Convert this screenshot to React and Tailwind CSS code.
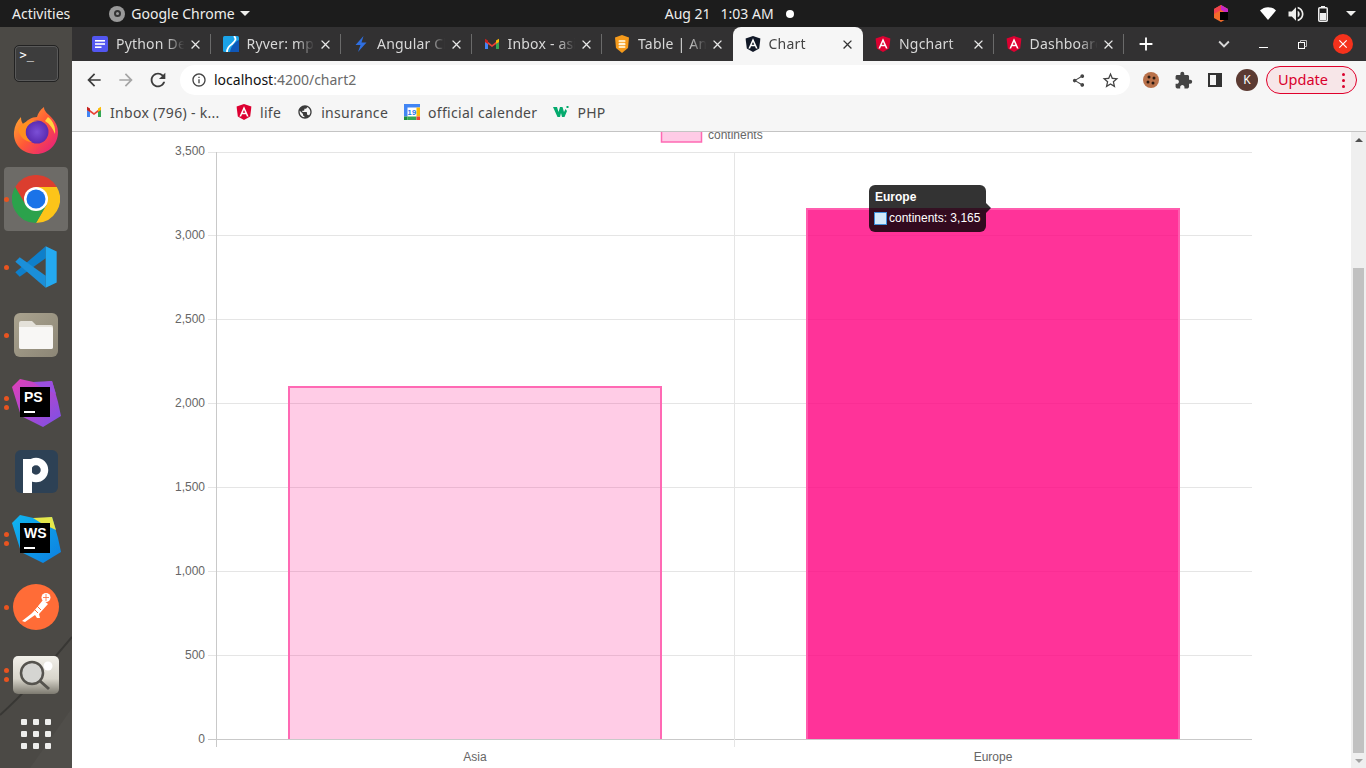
import React from "react";
import {
  MdArrowBack,
  MdArrowForward,
  MdRefresh,
  MdInfoOutline,
  MdShare,
  MdStarBorder,
  MdExtension,
  MdClose,
  MdAdd,
  MdKeyboardArrowDown,
  MdPublic,
  MdVolumeUp,
} from "react-icons/md";

const uiFont = "[font-family:'Noto_Sans','Open_Sans',sans-serif]";

/* ---------- favicons ---------- */
const DocsIcon = () => (
  <svg width="16" height="16" viewBox="0 0 16 16">
    <rect width="16" height="16" rx="2" fill="#5256f0" />
    <rect x="3" y="4" width="10" height="1.6" fill="#fff" />
    <rect x="3" y="7.2" width="10" height="1.6" fill="#fff" />
    <rect x="3" y="10.4" width="6.5" height="1.6" fill="#fff" />
  </svg>
);
const RyverIcon = () => (
  <svg width="16" height="16" viewBox="0 0 16 16">
    <rect width="16" height="16" rx="1.5" fill="#1aa3e8" />
    <path d="M14 5 C11 8 8 10 7 16 L16 16 L16 4Z" fill="#0f57b8" />
    <path d="M11 0 C14 3 12 5 9 8 C6 10 4 12 4 16" fill="none" stroke="#fff" strokeWidth="1.8" />
  </svg>
);
const BoltIcon = () => (
  <svg width="16" height="16" viewBox="0 0 16 16">
    <path d="M10.5 0 L2.5 9 L7.5 9 L5 16 L13.5 6.5 L8.5 6.5 Z" fill="#2f6fe0" />
  </svg>
);
const GmailIcon = () => (
  <svg width="16" height="16" viewBox="0 0 16 16">
    <path d="M1 13 V4.5 L4 6 V13Z" fill="#4285f4" />
    <path d="M15 13 V4.5 L12 6 V13Z" fill="#34a853" />
    <path d="M1 3.5 L8 9 L15 3.5 V6 L8 11 L1 6Z" fill="#ea4335" />
    <path d="M12 4.5 L15 2.8 V6 L12 7.5Z" fill="#fbbc04" />
    <path d="M1 2.8 L4 4.5 V7.5 L1 6Z" fill="#c5221f" />
  </svg>
);
const TableIcon = () => (
  <svg width="16" height="18" viewBox="0 0 16 18">
    <path d="M8 0 L15 2.5 L14 13 L8 18 L2 13 L1 2.5Z" fill="#f59a1b" />
    <rect x="4.5" y="5" width="7" height="2.2" rx="1" fill="#ffe9bd" />
    <rect x="4.5" y="8" width="7" height="2.2" rx="1" fill="#fff4da" />
    <rect x="4.5" y="11" width="7" height="2" rx="1" fill="#ffe9bd" />
  </svg>
);
const AngularIcon = ({ bg = "#dd0031", size = 16 }) => (
  <svg width={size} height={size} viewBox="0 0 16 16">
    <path d="M8 0 L15.4 2.6 L14.2 12.4 L8 16 L1.8 12.4 L0.6 2.6Z" fill={bg} />
    <path d="M8 2.2 L12.6 12.4 L10.9 12.4 L10 10.2 L6 10.2 L5.1 12.4 L3.4 12.4Z M8 6 L6.7 8.8 L9.3 8.8Z" fill="#fff" fillRule="evenodd" />
  </svg>
);
const W3Icon = () => (
  <svg width="16" height="12" viewBox="0 0 16 12">
    <path d="M0 1 H4 L5.5 6 L7 1 H9.5 L11 6 L12.5 3 L14 5 L11.5 11 H9 L8 7 L7 11 H4.5Z" fill="#04aa6d" />
    <rect x="13.5" y="0" width="2" height="2" fill="#04aa6d" />
  </svg>
);
const CalendarIcon = () => (
  <svg width="16" height="16" viewBox="0 0 16 16">
    <rect width="16" height="16" fill="#fff" />
    <path d="M0 0 H16 V3.5 H3.5 V12.5 H0Z" fill="#4285f4" />
    <rect x="12.5" y="3.5" width="3.5" height="9" fill="#fbbc04" />
    <rect x="3.5" y="12.5" width="9" height="3.5" fill="#34a853" />
    <rect y="12.5" width="3.5" height="3.5" fill="#1e8e3e" />
    <rect x="12.5" y="12.5" width="3.5" height="3.5" fill="#ea4335" />
    <text x="8" y="11" textAnchor="middle" fontSize="7.5" fontWeight="700" fill="#1a73e8" fontFamily="Liberation Sans">19</text>
  </svg>
);

/* ---------- dock icons ---------- */
const TerminalIcon = () => (
  <div className="w-[45px] h-[37px] rounded-[5px] bg-[#3d3d3d] border border-[#222] shadow-[inset_0_0_0_1px_#5a5a5a] pl-[5px] pt-[1px] text-[12px] leading-[16px] text-white [font-family:'DejaVu_Sans_Mono',monospace]">
    &gt;_
  </div>
);
const FirefoxIcon = () => (
  <svg width="48" height="48" viewBox="0 0 48 48">
    <defs>
      <linearGradient id="ff1" x1="0" y1="0" x2="1" y2="1">
        <stop offset="0" stopColor="#ffbd2e" />
        <stop offset="0.5" stopColor="#ff5a36" />
        <stop offset="1" stopColor="#e31587" />
      </linearGradient>
      <radialGradient id="ff2" cx="0.5" cy="0.5" r="0.5">
        <stop offset="0" stopColor="#7b4fd6" />
        <stop offset="1" stopColor="#5a2bb0" />
      </radialGradient>
    </defs>
    <path d="M24 47 C10 47 1 37 2 25 C2.5 19 5 14 9 10 C9 14 10 16 12 18 C14 13 20 10 25 10 C26 6 28 3 32 0 C32 4 35 6 39 10 C44 15 46 20 46 25 C46 37 37 47 24 47Z" fill="url(#ff1)" />
    <circle cx="25" cy="25" r="11.5" fill="url(#ff2)" />
    <path d="M6 22 C10 15 18 12 26 14 C21 14 17 17 15 20 C12 25 14 32 20 35 C13 35 7 29 6 22Z" fill="#ff8f1f" />
    <path d="M36 10 C41 14 44 20 43 27 C41 22 38 17 33 14Z" fill="#ffd23f" />
  </svg>
);
const ChromeIcon = () => (
  <svg width="48" height="48" viewBox="0 0 48 48">
    <path d="M24 12 L44.8 12 A24 24 0 0 0 3.2 12 L13.6 30 L24 24Z" fill="#db3e2f" />
    <path d="M44.8 12 A24 24 0 0 1 24 48 L34.4 30 L24 24 L24 12Z" fill="#fcc419" />
    <path d="M24 48 A24 24 0 0 1 3.2 12 L13.6 30 L24 24 L34.4 30Z" fill="#2ba24c" />
    <circle cx="24" cy="24" r="12" fill="#fff" />
    <circle cx="24" cy="24" r="9.5" fill="#1a73e8" />
  </svg>
);
const VscodeIcon = () => (
  <svg width="44" height="44" viewBox="0 0 100 100">
    <path d="M72 3 L3 62 L13 72 L72 30Z" fill="#0e7fcb" />
    <path d="M3 38 L13 28 L72 70 V97Z" fill="#1b8fd9" />
    <path d="M72 3 L97 15 V85 L72 97Z" fill="#24a9f0" />
  </svg>
);
const FilesIcon = () => (
  <div className="w-[44px] h-[44px] rounded-[6px] bg-gradient-to-br from-[#aaa38f] to-[#8c8676] flex items-center justify-center">
    <svg width="34" height="28" viewBox="0 0 34 28">
      <path d="M2 0 H13 L17 4 H32 a2 2 0 0 1 2 2 V26 a2 2 0 0 1 -2 2 H2 a2 2 0 0 1 -2 -2 V2 a2 2 0 0 1 2 -2Z" fill="#e4e1d9" />
      <path d="M0 6 H32 a2 2 0 0 1 2 2 V26 a2 2 0 0 1 -2 2 H2 a2 2 0 0 1 -2 -2Z" fill="#f8f7f5" />
    </svg>
  </div>
);
const JetbrainsIcon = ({ label, id, colors }) => (
  <svg width="50" height="50" viewBox="0 0 50 50">
    <defs>
      <linearGradient id={id} x1="0" y1="0" x2="1" y2="1">
        <stop offset="0" stopColor={colors[0]} />
        <stop offset="1" stopColor={colors[1]} />
      </linearGradient>
    </defs>
    <path d="M1 9 L9 1 L27 5 L41 3 L47 24 L50 38 L32 49 L10 38Z" fill={`url(#${id})`} />
    <path d="M22 4 L41 3 L45 16 L30 9Z" fill={colors[2]} />
    <rect x="9" y="9" width="30" height="30" fill="#000" />
    <text x="13" y="24" fontSize="14" fontWeight="700" fill="#fff" fontFamily="Liberation Sans">{label}</text>
    <rect x="13" y="33" width="11" height="2" fill="#fff" />
  </svg>
);
const PIcon = () => (
  <svg width="43" height="43" viewBox="0 0 43 43">
    <rect width="43" height="43" rx="6" fill="#2d4155" />
    <rect x="8" y="9" width="9" height="34" fill="#fff" />
    <circle cx="21" cy="20" r="8.5" fill="none" stroke="#fff" strokeWidth="7.5" />
  </svg>
);
const PostmanIcon = () => (
  <svg width="46" height="46" viewBox="0 0 46 46">
    <circle cx="23" cy="23" r="23" fill="#ff6c37" />
    <path d="M9 37 L18 30 L21 27 L30 16 L35 20 L26 30 L27 34 L24 34 L22 31 L12 38Z" fill="#fff" />
    <path d="M20 24 L25 29 M23 21 L28 26" stroke="#ff6c37" strokeWidth="1" />
    <circle cx="33" cy="13.5" r="4.5" fill="#fff" />
    <path d="M33 10 V17 M30 13.5 H36" stroke="#ff6c37" strokeWidth="0.8" />
  </svg>
);
const SearchAppIcon = () => (
  <svg width="46" height="38" viewBox="0 0 46 38">
    <defs>
      <linearGradient id="lens" x1="0" y1="0" x2="0" y2="1">
        <stop offset="0" stopColor="#f2f0ea" />
        <stop offset="0.6" stopColor="#d8d5cb" />
        <stop offset="1" stopColor="#7d7a70" />
      </linearGradient>
    </defs>
    <rect width="46" height="38" rx="5" fill="url(#lens)" />
    <circle cx="35" cy="10" r="4.5" fill="#fff" />
    <circle cx="19" cy="17" r="11" fill="#d5d5d2" stroke="#55534e" strokeWidth="2.5" />
    <path d="M27 25 L36 33" stroke="#55534e" strokeWidth="3" />
  </svg>
);
const GridIcon = () => (
  <div className="grid grid-cols-3 gap-[6px]">
    {Array.from({ length: 9 }).map((_, i) => (
      <div key={i} className="w-[6px] h-[6px] rounded-[1px] bg-[#eeeeec]" />
    ))}
  </div>
);

const dockItems = [
  { icon: <TerminalIcon />, dots: 0 },
  { icon: <FirefoxIcon />, dots: 0 },
  { icon: <ChromeIcon />, dots: 1, active: true },
  { icon: <VscodeIcon />, dots: 1 },
  { icon: <FilesIcon />, dots: 1 },
  { icon: <JetbrainsIcon label="PS" id="psg" colors={["#e040b8", "#7a50e8", "#9a4fe0"]} />, dots: 2 },
  { icon: <PIcon />, dots: 0 },
  { icon: <JetbrainsIcon label="WS" id="wsg" colors={["#10b5f0", "#0d7fe0", "#e6e84a"]} />, dots: 2 },
  { icon: <PostmanIcon />, dots: 1 },
  { icon: <SearchAppIcon />, dots: 2 },
];

const Dock = () => (
  <aside className="relative w-[72px] shrink-0 bg-[#4b4945] flex flex-col items-center pt-[2px] overflow-hidden">
    <svg className="absolute left-0 bottom-0" width="72" height="170" viewBox="0 0 72 170">
      <path d="M0 117 C25 95 50 65 72 39" stroke="#383734" strokeWidth="2" fill="none" />
      <path d="M30 170 L72 110 V170Z" fill="#504e4a" />
    </svg>
    {dockItems.map((item, i) => (
      <div key={i} className="relative w-[72px] h-[68px] flex items-center justify-center shrink-0">
        {item.active && <div className="absolute left-[4px] top-[2px] w-[64px] h-[64px] rounded-[4px] bg-[#6d6b67]" />}
        <div className="relative">{item.icon}</div>
        {item.dots > 0 && (
          <div className="absolute left-[4px] top-0 bottom-0 flex flex-col justify-center gap-[4px]">
            {Array.from({ length: item.dots }).map((_, d) => (
              <div key={d} className="w-[5px] h-[5px] rounded-full bg-[#e95420]" />
            ))}
          </div>
        )}
      </div>
    ))}
    <div className="relative mt-[10px]">
      <GridIcon />
    </div>
  </aside>
);

/* ---------- top panel ---------- */
const TopBar = () => (
  <header className={`h-[27px] shrink-0 bg-[#1c1c1c] text-[#eeeeec] text-[14px] flex items-center relative ${uiFont}`}>
    <span className="ml-[12px]">Activities</span>
    <div className="ml-[39px] flex items-center">
      <div className="w-[16px] h-[16px] rounded-full bg-[#9a9a9a] flex items-center justify-center">
        <div className="w-[7px] h-[7px] rounded-full border-2 border-[#333]" />
      </div>
      <span className="ml-[6px]">Google Chrome</span>
      <div className="ml-[5px] w-0 h-0 border-x-[5px] border-x-transparent border-t-[5px] border-t-[#eeeeec]" />
    </div>
    <div className="ml-[415px] flex items-center">
      <span>Aug 21</span>
      <span className="ml-[10px]">1:03 AM</span>
      <div className="ml-[12px] w-[8px] h-[8px] rounded-full bg-white" />
    </div>
    <div className="ml-auto flex items-center mr-[10px]">
      <svg width="16" height="17" viewBox="0 0 16 17">
        <path d="M8 0 L15 4 V13 L8 17 L1 13 V4Z" fill="#f26b2a" />
        <path d="M8 0 L15 4 V9 L8 5Z" fill="#c726c7" />
        <path d="M1 4 L8 0 V5 L1 9Z" fill="#f0414d" />
        <rect x="7" y="7" width="8" height="8" fill="#000" />
      </svg>
      <svg className="ml-[31px]" width="16" height="13" viewBox="0 0 16 13">
        <path d="M0 3.5 C4.5 -1 11.5 -1 16 3.5 L8 13Z" fill="#fff" />
      </svg>
      <MdVolumeUp className="ml-[10px] text-[#eeeeec]" size={20} />
      <svg className="ml-[12px]" width="10" height="16" viewBox="0 0 10 16">
        <rect x="3" y="0" width="4" height="2" fill="#eee" />
        <rect x="0.75" y="1.75" width="8.5" height="13.5" rx="1" fill="none" stroke="#eee" strokeWidth="1.5" />
        <rect x="2" y="7" width="6" height="7" fill="#eee" />
      </svg>
      <div className="ml-[18px] w-0 h-0 border-x-[5px] border-x-transparent border-t-[5px] border-t-[#eeeeec]" />
    </div>
  </header>
);

/* ---------- chrome tabs ---------- */
const tabs = [
  { title: "Python Developer", icon: <DocsIcon /> },
  { title: "Ryver: mp3 player", icon: <RyverIcon /> },
  { title: "Angular Charts", icon: <BoltIcon /> },
  { title: "Inbox - asif", icon: <GmailIcon /> },
  { title: "Table | Angular", icon: <TableIcon /> },
  { title: "Chart", icon: <AngularIcon bg="#111827" />, active: true },
  { title: "Ngchart", icon: <AngularIcon /> },
  { title: "Dashboard", icon: <AngularIcon /> },
];

const Tab = ({ tab, sep }) => (
  <div
    className={`relative w-[130.5px] h-[34px] shrink-0 flex items-center pl-[12px] pr-[8px] ${
      tab.active ? "bg-[#f6f6f6] rounded-t-[8px] text-[#444]" : "text-[#d8d8d8]"
    }`}
  >
    <div className="w-[16px] h-[18px] flex items-center justify-center shrink-0">{tab.icon}</div>
    <div className="ml-[8px] mb-[2px] flex-1 overflow-hidden whitespace-nowrap text-[14px] tracking-[0.2px] [mask-image:linear-gradient(to_right,black_70%,transparent_95%)]">
      {tab.title}
    </div>
    <MdClose size={15} className={`shrink-0 ${tab.active ? "text-[#333]" : "text-[#e8e8e8]"}`} />
    {sep && <div className="absolute right-0 top-[7px] w-px h-[20px] bg-[#6a6a6a]" />}
  </div>
);

const TabStrip = () => (
  <div className={`h-[34px] shrink-0 bg-[#323132] flex items-center pl-[8px] ${uiFont}`}>
    {tabs.map((t, i) => (
      <Tab key={i} tab={t} sep={!t.active && i !== 4} />
    ))}
    <MdAdd size={22} className="ml-[11px] text-white" />
    <MdKeyboardArrowDown size={22} className="ml-[56px] text-[#d8d8d8]" />
    <div className="ml-[24px] w-[9px] h-px bg-white mt-[6px]" />
    <svg className="ml-[30px]" width="9" height="9" viewBox="0 0 9 9">
      <rect x="0.5" y="2.5" width="6" height="6" fill="none" stroke="#fff" />
      <path d="M2.5 2.5 V0.5 H8.5 V6.5 H6.5" fill="none" stroke="#bbb" />
    </svg>
    <div className="ml-[26px] w-[20px] h-[20px] rounded-full bg-[#f5321c] flex items-center justify-center">
      <MdClose size={14} className="text-white" />
    </div>
  </div>
);

const Toolbar = () => (
  <div className={`h-[34px] shrink-0 bg-[#f6f6f6] flex items-center pl-[12px] pt-[4px] ${uiFont}`}>
    <MdArrowBack size={20} className="text-[#3c3c3c]" />
    <MdArrowForward size={20} className="ml-[12px] text-[#a5a5a5]" />
    <MdRefresh size={22} className="ml-[11px] text-[#3c3c3c]" />
    <div className="ml-[11px] w-[950px] h-[30px] rounded-full bg-white flex items-center pl-[11px] pr-[10px]">
      <MdInfoOutline size={16} className="text-[#444]" />
      <span className="ml-[7px] mb-[2px] text-[14px] text-[#111]">localhost</span>
      <span className="mb-[2px] text-[14px] text-[#6a6a6a]">:4200/chart2</span>
      <MdShare size={15} className="ml-auto text-[#444]" />
      <MdStarBorder size={19} className="ml-[15px] text-[#444]" />
    </div>
    <svg className="ml-[12px]" width="18" height="18" viewBox="0 0 18 18">
      <circle cx="9" cy="9" r="8" fill="#b9714a" />
      <circle cx="7" cy="6" r="1.5" fill="#2b1a12" />
      <circle cx="12" cy="7" r="1.5" fill="#2b1a12" />
      <circle cx="6" cy="11" r="1.5" fill="#2b1a12" />
      <circle cx="11" cy="12" r="1.5" fill="#2b1a12" />
    </svg>
    <MdExtension size={19} className="ml-[14px] text-[#444]" />
    <svg className="ml-[15px]" width="14" height="14" viewBox="0 0 14 14">
      <rect x="1" y="1" width="12" height="12" fill="none" stroke="#333" strokeWidth="2" />
      <rect x="8" y="1" width="5" height="12" fill="#333" />
    </svg>
    <div className="ml-[14px] w-[22px] h-[22px] rounded-full bg-[#5b3a32] text-white text-[12px] flex items-center justify-center">K</div>
    <div className="ml-[8px] w-[91px] h-[28px] rounded-full bg-[#f7e6e8] border border-[#e0002b] text-[#d9002c] text-[14.5px] flex items-center pl-[11px]">
      <span>Update</span>
      <div className="ml-auto mr-[11px] flex flex-col gap-[3px]">
        <div className="w-[3px] h-[3px] rounded-full bg-[#d9002c]" />
        <div className="w-[3px] h-[3px] rounded-full bg-[#d9002c]" />
        <div className="w-[3px] h-[3px] rounded-full bg-[#d9002c]" />
      </div>
    </div>
  </div>
);

const bookmarks = [
  { title: "Inbox (796) - k...", icon: <GmailIcon />, gap: "w-[110px]" },
  { title: "life", icon: <AngularIcon />, gap: "w-auto" },
  { title: "insurance", icon: <MdPublic size={18} className="text-[#3c3c3c]" />, gap: "w-auto" },
  { title: "official calender", icon: <CalendarIcon />, gap: "w-auto" },
  { title: "PHP", icon: <W3Icon />, gap: "w-auto" },
];

const BookmarkBar = () => (
  <div className={`h-[37px] shrink-0 bg-[#f6f6f6] border-b border-[#c4c4c4] flex items-center pl-[14px] pb-[2px] gap-[16px] text-[14px] text-[#4a4a4a] tracking-[0.3px] ${uiFont}`}>
    {bookmarks.map((b, i) => (
      <div key={i} className="flex items-center gap-[8px]">
        <div className="w-[16px] flex items-center justify-center">{b.icon}</div>
        <span className={`${b.gap} whitespace-nowrap`}>{b.title}</span>
      </div>
    ))}
  </div>
);

/* ---------- chart ---------- */
const ticks = [0, 500, 1000, 1500, 2000, 2500, 3000, 3500];
const tickY = (v) => 739.5 - (v / 500) * 84;

const Chart = () => (
  <svg className="block" width="1279" height="636" viewBox="72 132 1279 636" fontFamily="Liberation Sans" fontSize="12" fill="#666">
    {/* legend, half scrolled away */}
    <rect x="661.5" y="120" width="40" height="22" fill="#fecbe6" stroke="#fe69b3" strokeWidth="1.5" />
    <text x="708" y="139">continents</text>

    {ticks.map((v) => (
      <g key={v}>
        {/* top grid line sits a pixel lower than the step says */}
        <line x1="208" x2="1252" y1={v === 3500 ? 152.5 : tickY(v)} y2={v === 3500 ? 152.5 : tickY(v)} stroke={v === 0 ? "#c9c9c9" : "#e5e5e5"} />
        <text x="205" y={tickY(v) + 3.5} textAnchor="end">{v.toLocaleString("en-US")}</text>
      </g>
    ))}
    <line x1="216.5" x2="216.5" y1="152" y2="747" stroke="#c9c9c9" />
    <line x1="734.5" x2="734.5" y1="152" y2="747" stroke="#e5e5e5" />

    {/* bars have no bottom border, same as the chart lib */}
    <rect x="290" y="388" width="370" height="351" fill="#ff0080" fillOpacity="0.2" />
    <path d="M289 739 V387 H661 V739" fill="none" stroke="#ff69b4" strokeWidth="2" />
    <rect x="808" y="210" width="370" height="529" fill="#ff0080" fillOpacity="0.8" />
    <path d="M807 739 V209 H1179 V739" fill="none" stroke="#ff5cae" strokeWidth="2" />

    <text x="475" y="761" textAnchor="middle">Asia</text>
    <text x="993" y="761" textAnchor="middle">Europe</text>
  </svg>
);

const Tooltip = () => (
  <div className="absolute left-[797px] top-[53px] w-[117px] h-[47px] rounded-[6px] bg-black/80 text-white text-[12px] leading-[14px] [font-family:'Liberation_Sans',sans-serif] pl-[5px]">
    <div className="absolute -right-[5px] top-[18px] w-0 h-0 border-y-[5px] border-y-transparent border-l-[5px] border-l-black/80" />
    <div className="pt-[5px] pl-[1px] font-bold">Europe</div>
    <div className="mt-[7px] flex items-center">
      <div className="w-[13px] h-[13px] bg-[#d2e8fb] border border-[#3d8fdb] shrink-0" />
      <span className="ml-[2px] whitespace-nowrap">continents: 3,165</span>
    </div>
  </div>
);

const Scrollbar = () => (
  <div className="w-[15px] shrink-0 bg-[#efefef] flex flex-col items-center">
    <div className="mt-[6px] w-0 h-0 border-x-[4px] border-x-transparent border-b-[4px] border-b-[#505050]" />
    <div className="mt-[126px] w-[11px] flex-1 bg-[#c1c1c1]" />
    <div className="mt-[6px] mb-[5px] w-0 h-0 border-x-[4px] border-x-transparent border-t-[4px] border-t-[#a3a3a3]" />
  </div>
);

export default function App() {
  return (
    <div className="w-[1366px] h-[768px] overflow-hidden flex flex-col bg-white">
      <TopBar />
      <div className="flex flex-1 min-h-0">
        <Dock />
        <div className="flex-1 min-w-0 flex flex-col">
          <TabStrip />
          <Toolbar />
          <BookmarkBar />
          <div className="flex flex-1 min-h-0">
            <main className="relative flex-1 overflow-hidden bg-white">
              <Chart />
              <Tooltip />
            </main>
            <Scrollbar />
          </div>
        </div>
      </div>
    </div>
  );
}
